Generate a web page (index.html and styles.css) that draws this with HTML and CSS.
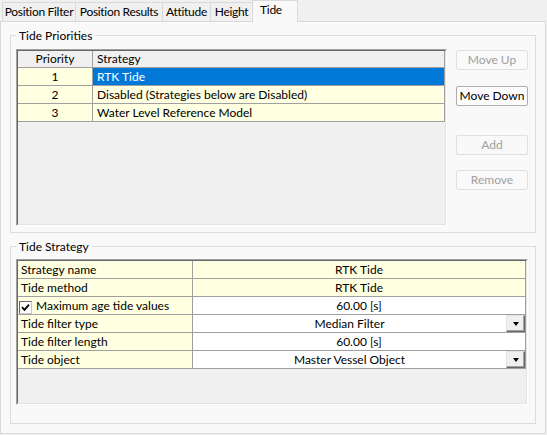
FILE: index.html
```html
<!DOCTYPE html>
<html lang="en">
<head>
    <meta charset="UTF-8">
    <title>Tide</title>
    <link rel="stylesheet" href="styles.css">
</head>
<body>
    <div class="tabs">
        <div class="tab tab-filter">Position Filter</div>
        <div class="tab tab-results">Position Results</div>
        <div class="tab tab-attitude">Attitude</div>
        <div class="tab tab-height">Height</div>
        <div class="tab tab-active">Tide</div>
    </div>

    <div class="page">
        <!-- Priorities list + buttons -->
        <fieldset class="group group-priorities">
            <legend>Tide Priorities</legend>
            <div class="priorities-body">
                <div class="grid grid-priorities">
                    <div class="grid-inner">
                        <table class="cells">
                            <colgroup><col class="col-priority"><col></colgroup>
                            <tr class="head">
                                <th class="center">Priority</th>
                                <th>Strategy</th>
                            </tr>
                            <tr>
                                <td class="center">1</td>
                                <td class="selected">RTK Tide</td>
                            </tr>
                            <tr>
                                <td class="center">2</td>
                                <td>Disabled (Strategies below are Disabled)</td>
                            </tr>
                            <tr>
                                <td class="center">3</td>
                                <td>Water Level Reference Model</td>
                            </tr>
                        </table>
                    </div>
                </div>
                <div class="side-buttons">
                    <button class="btn" disabled>Move Up</button>
                    <button class="btn btn-down">Move Down</button>
                    <button class="btn btn-add" disabled>Add</button>
                    <button class="btn btn-remove" disabled>Remove</button>
                </div>
            </div>
        </fieldset>

        <!-- Strategy properties -->
        <fieldset class="group group-strategy">
            <legend>Tide Strategy</legend>
            <div class="grid grid-strategy">
                <div class="grid-inner">
                    <table class="cells">
                        <colgroup><col class="col-name"><col></colgroup>
                        <tr class="readonly">
                            <td>Strategy name</td>
                            <td class="value">RTK Tide</td>
                        </tr>
                        <tr class="readonly">
                            <td>Tide method</td>
                            <td class="value">RTK Tide</td>
                        </tr>
                        <tr>
                            <td class="check-cell">
                                <span class="checkbox">
                                    <svg width="9" height="9" viewBox="0 0 9 9"><path d="M1 4.2 L3.5 6.8 L8 1.6" fill="none" stroke="#000" stroke-width="1.8"/></svg>
                                </span>Maximum age tide values
                            </td>
                            <td class="value">60.00 [s]</td>
                        </tr>
                        <tr>
                            <td>Tide filter type</td>
                            <td class="value">
                                <div class="combo">
                                    <span class="combo-text">Median Filter</span>
                                    <span class="combo-btn"><span class="arrow"></span></span>
                                </div>
                            </td>
                        </tr>
                        <tr>
                            <td>Tide filter length</td>
                            <td class="value">60.00 [s]</td>
                        </tr>
                        <tr>
                            <td>Tide object</td>
                            <td class="value">
                                <div class="combo">
                                    <span class="combo-text">Master Vessel Object</span>
                                    <span class="combo-btn"><span class="arrow"></span></span>
                                </div>
                            </td>
                        </tr>
                    </table>
                </div>
            </div>
        </fieldset>
    </div>
</body>
</html>
```

FILE: styles.css
```css
* {
    box-sizing: border-box;
}

body {
    margin: 0;
    background: #f0f0f0;
    font-family: Lato, "Liberation Sans", sans-serif;
    font-size: 12px;
    color: #000;
}

/* Tab strip */
.tabs {
    display: flex;
    align-items: flex-start;
    height: 21px;
    padding-left: 2px;
}

.tab {
    margin-top: 2px;
    margin-left: -1px;
    height: 19px;
    border: 1px solid #d9d9d9;
    border-bottom: none;
    background: #f0f0f0;
    line-height: 18px;
    letter-spacing: -0.3px;
    text-align: center;
    white-space: nowrap;
}

.tab-filter {
    margin-left: 0;
    width: 74px;
}

.tab-results {
    width: 88px;
}

.tab-attitude {
    width: 49px;
}

.tab-height {
    width: 43px;
}

.tab-active {
    position: relative;
    z-index: 1;
    margin-top: 0;
    width: 46px;
    height: 22px;
    padding-right: 8px;
    background: #f9f9f9;
}

/* Tab page */
.page {
    width: 546px;
    height: 413px;
    border: 1px solid #d9d9d9;
    background: #f9f9f9;
    padding: 6px 9px 0 9px;
}

.group {
    margin: 0;
    min-width: 0;
    border: 1px solid #dcdcdc;
    padding: 6px 7px 6px 5px;
}

.group legend {
    padding: 0 3px;
    line-height: 15px;
}

.group-strategy {
    margin-top: 6px;
    padding: 5px 7px 18px 5px;
}

.priorities-body {
    display: flex;
}

/* Data grids */
.grid {
    border: 1px solid;
    border-color: #a0a0a0 #fff #fff #a0a0a0;
    background: #f0f0f0;
}

.grid-inner {
    height: 100%;
    border: 1px solid;
    border-color: #696969 #e3e3e3 #e3e3e3 #696969;
}

.grid-priorities {
    width: 431px;
    height: 177px;
}

.grid-strategy {
    width: 512px;
    height: 146px;
}

.cells {
    width: 100%;
    table-layout: fixed;
    border-collapse: separate;
    border-spacing: 0;
}

.col-priority {
    width: 75px;
}

.col-name {
    width: 175px;
}

.cells th,
.cells td {
    padding: 0 0 0 4px;
    line-height: 17px;
    border-right: 1px solid #a0a0a0;
    border-bottom: 1px solid #a0a0a0;
    background: #ffffe1;
    font-weight: normal;
    text-align: left;
    white-space: nowrap;
    overflow: hidden;
}

.cells .head th {
    line-height: 16px;
    background: #f0f0f0;
}

.cells .center {
    padding-left: 0;
    text-align: center;
}

.cells td.selected {
    background: #0078d7;
    color: #fff;
}

.grid-strategy .cells td {
    padding-left: 3px;
}

.grid-strategy .cells td.value {
    padding: 0;
    text-align: center;
    background: #fff;
}

.grid-strategy .readonly td.value {
    background: #ffffe1;
}

.grid-strategy .cells td.check-cell {
    padding-left: 1px;
}

.checkbox {
    display: inline-flex;
    align-items: center;
    justify-content: center;
    width: 13px;
    height: 13px;
    margin-right: 4px;
    vertical-align: -2px;
    border: 1px solid;
    border-color: #696969 #c8c8c8 #c8c8c8 #696969;
    background: #fff;
}

.combo {
    display: flex;
    height: 17px;
}

.combo-text {
    flex: 1;
    text-align: center;
}

.combo-btn {
    display: flex;
    align-items: center;
    justify-content: center;
    width: 19px;
    height: 17px;
    border: 1px solid;
    border-color: #e3e3e3 #696969 #696969 #e3e3e3;
    box-shadow: inset -1px -1px 0 #a0a0a0;
    background: #f0f0f0;
}

.arrow {
    width: 0;
    height: 0;
    border-left: 3.5px solid transparent;
    border-right: 3.5px solid transparent;
    border-top: 4px solid #000;
    margin-top: 1px;
}

/* Buttons on the right */
.side-buttons {
    display: flex;
    flex-direction: column;
    margin-left: 9px;
    padding-top: 1px;
}

.btn {
    width: 72px;
    height: 20px;
    padding: 0;
    border: 1px solid #adadad;
    border-radius: 2px;
    background: #fdfdfd;
    font: inherit;
    line-height: 18px;
    color: #000;
}

.btn:disabled {
    color: #a0a0a0;
    border-color: #e0e0e0;
    background: #f9f9f9;
}

.btn-down {
    margin-top: 16px;
}

.btn-add {
    margin-top: 29px;
}

.btn-remove {
    margin-top: 15px;
}
```
